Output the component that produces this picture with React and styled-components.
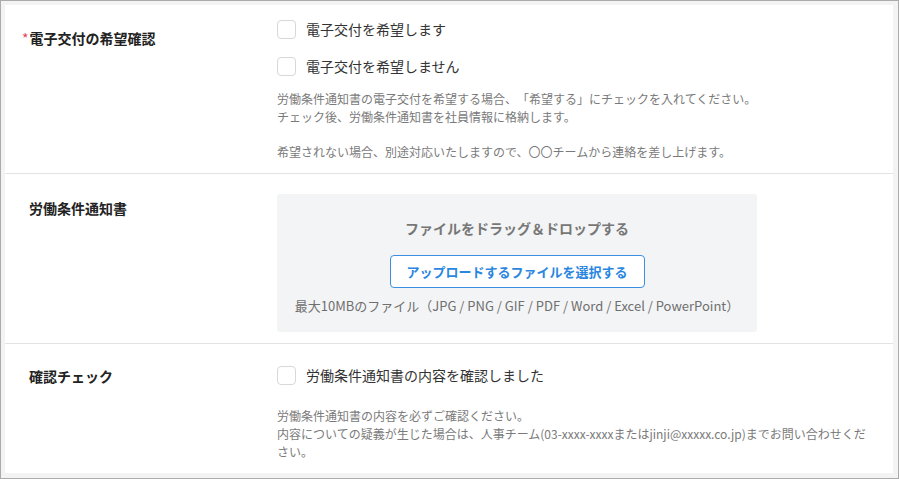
import styled, { createGlobalStyle } from 'styled-components';

const GlobalStyle = createGlobalStyle`
  html, body {
    margin: 0;
    padding: 0;
    background: #f3f3f3;
  }
  body {
    font-family: "Noto Sans CJK JP", "Noto Sans", sans-serif;
    color: #333;
    text-spacing-trim: space-all;
  }
`;

// Styled Components
const Frame = styled.div`
  box-sizing: border-box;
  width: 899px;
  height: 479px;
  border: 1px solid #ababab;
  background: #f3f3f3;
  padding: 4px 5px 5px 4px;
  overflow: hidden;
`;

const Card = styled.div`
  background: #fff;
  height: 100%;
  box-sizing: border-box;
`;

const Section = styled.section`
  display: grid;
  grid-template-columns: 248px 1fr;
  padding: ${({ $pad }) => $pad};
  padding-left: 24px;
  padding-right: 24px;
  border-bottom: ${({ $last }) => ($last ? 'none' : '1px solid #e3e3e3')};
`;

const Label = styled.div`
  font-size: 14px;
  font-weight: 700;
  line-height: 20px;
  color: #222;
  margin-top: ${({ $top }) => $top}px;
`;

const Required = styled.span`
  color: #e8465e;
  margin-left: -7px;
  margin-right: 1px;
  font-weight: 400;
`;

const Content = styled.div`
  display: flex;
  flex-direction: column;
`;

const Options = styled.div`
  display: flex;
  flex-direction: column;
  gap: 19px;
`;

const Option = styled.label`
  display: flex;
  align-items: center;
  gap: 10px;
  height: 18px;
  font-size: 14px;
  color: #333;
`;

const Box = styled.span`
  box-sizing: border-box;
  width: 19px;
  height: 19px;
  border: 1px solid #d8d8d8;
  border-radius: 4px;
  background: #fff;
  flex: none;
`;

const Help = styled.p`
  margin: ${({ $top }) => $top}px 0 0;
  font-size: 12px;
  line-height: ${({ $lh }) => $lh || 17.5}px;
  color: #7a7a7a;
  white-space: pre-line;
  text-spacing-trim: space-all;
`;

const DropZone = styled.div`
  width: 480px;
  box-sizing: border-box;
  background: #f3f4f5;
  border-radius: 3px;
  padding: 24px 0 16px;
  display: flex;
  flex-direction: column;
  align-items: center;
`;

const DropTitle = styled.div`
  font-size: 14px;
  font-weight: 700;
  line-height: 20px;
  color: #777;
`;

const UploadButton = styled.button`
  margin-top: 17px;
  width: 255px;
  height: 33px;
  background: #fff;
  border: 1px solid #3b8fe2;
  border-radius: 4px;
  color: #2b86df;
  font-family: inherit;
  font-size: 13px;
  font-weight: 700;
  cursor: pointer;
`;

const Caption = styled.div`
  margin-top: 8px;
  font-size: 13px;
  line-height: 20px;
  color: #6f6f6f;
`;

export default function App() {
  return (
    <>
      <GlobalStyle />
      <Frame>
        <Card>
          <Section $pad="15px 0 13px">
            <Label $top={8}>
              <Required>*</Required>電子交付の希望確認
            </Label>
            <Content>
              <Options>
                <Option>
                  <Box />
                  電子交付を希望します
                </Option>
                <Option>
                  <Box />
                  電子交付を希望しません
                </Option>
              </Options>
              <Help $top={15}>
                {'労働条件通知書の電子交付を希望する場合、「希望する」にチェックを入れてください。\nチェック後、労働条件通知書を社員情報に格納します。\n\n希望されない場合、別途対応いたしますので、〇〇チームから連絡を差し上げます。'}
              </Help>
            </Content>
          </Section>

          <Section $pad="20px 0 11px">
            <Label $top={4}>労働条件通知書</Label>
            <Content>
              <DropZone>
                <DropTitle>ファイルをドラッグ＆ドロップする</DropTitle>
                <UploadButton>アップロードするファイルを選択する</UploadButton>
                <Caption>最大10MBのファイル（JPG / PNG / GIF / PDF / Word / Excel / PowerPoint）</Caption>
              </DropZone>
            </Content>
          </Section>

          <Section $pad="22px 0 10px" $last>
            <Label $top={0}>確認チェック</Label>
            <Content>
              <Option>
                <Box />
                労働条件通知書の内容を確認しました
              </Option>
              <Help $top={23} $lh={18}>
                {'労働条件通知書の内容を必ずご確認ください。\n内容についての疑義が生じた場合は、人事チーム(03-xxxx-xxxxまたはjinji@xxxxx.co.jp)までお問い合わせください。'}
              </Help>
            </Content>
          </Section>
        </Card>
      </Frame>
    </>
  );
}
